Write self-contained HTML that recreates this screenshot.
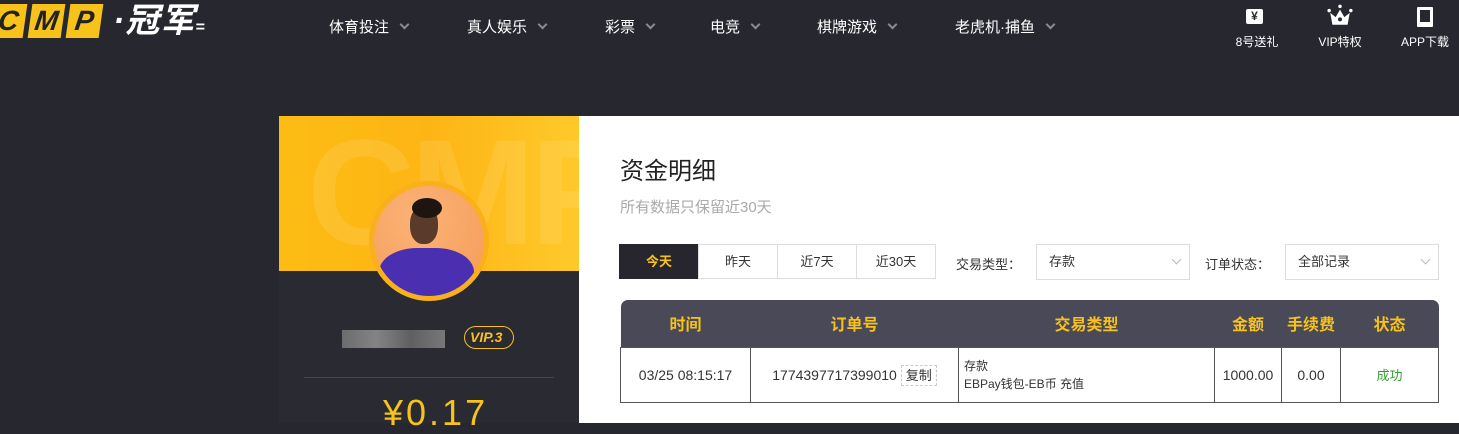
<!DOCTYPE html>
<html><head><meta charset="utf-8"><style>
*{margin:0;padding:0;box-sizing:border-box}
body{width:1459px;height:423px;overflow:hidden;background:#272730;font-family:"Liberation Sans","Noto Sans CJK SC",sans-serif;position:relative}
.a{position:absolute}
.nav{color:#fff;font-size:15px;top:16px}
.nav i{display:inline-block;width:7px;height:7px;border-right:2px solid #8a8a92;border-bottom:2px solid #8a8a92;transform:rotate(45deg);margin-left:12px;position:relative;top:-4px}
.ic{color:#fff;font-size:12px;top:33px;text-align:center;width:60px}
.logo b{display:inline-block;width:33px;height:34px;background:#f7c31b;color:#222;font-style:italic;font-weight:900;font-size:28px;text-align:center;line-height:34px;margin-right:5px;transform:skewX(-8deg)}
.tab{top:244px;height:35px;border:1px solid #ddd;font-size:13px;text-align:center;line-height:33px;color:#333;background:#fff}
.sel{top:244px;height:36px;border:1px solid #ddd;font-size:13px;line-height:34px;padding-left:12px;color:#333;background:#fff}
.sel:after{content:"";position:absolute;right:9px;top:11px;width:6px;height:6px;border-right:1px solid #bbb;border-bottom:1px solid #bbb;transform:rotate(45deg)}
table{border-collapse:collapse;position:absolute;left:620px;top:300px;width:819px}
th{background:#4a4957;color:#f6c21b;font-size:16px;height:47px;font-weight:bold}
td{border:1px solid #555;background:#fff;height:55px;font-size:14px;color:#333;text-align:center}
</style></head><body>
<div class="a logo" style="left:-8px;top:4px"><b>C</b><b>M</b><b>P</b></div>
<div class="a" style="left:113px;top:2px;color:#fff;font-size:34px;font-weight:bold;font-style:italic;line-height:38px;letter-spacing:1px">·冠军<span style="font-size:16px">=</span></div>
<div class="a nav" style="left:329px">体育投注<i></i></div>
<div class="a nav" style="left:467px">真人娱乐<i></i></div>
<div class="a nav" style="left:605px">彩票<i></i></div>
<div class="a nav" style="left:710px">电竞<i></i></div>
<div class="a nav" style="left:817px">棋牌游戏<i></i></div>
<div class="a nav" style="left:955px">老虎机·捕鱼<i></i></div>
<div class="a" style="left:1246px;top:9px;width:17px;height:15px;background:#fff;border-radius:2px;color:#272730;font-size:12px;font-weight:bold;text-align:center;line-height:15px">¥</div>
<div class="a ic" style="left:1227px">8号送礼</div>
<svg class="a" style="left:1327px;top:4px" width="26" height="22" viewBox="0 0 24 20"><circle cx="12" cy="2" r="1.6" fill="#fff"/><circle cx="2" cy="6" r="1.6" fill="#fff"/><circle cx="22" cy="6" r="1.6" fill="#fff"/><path d="M3 8 L8 12 L12 5 L16 12 L21 8 L19 19 H5Z" fill="#fff"/><circle cx="12" cy="14" r="1.8" fill="#272730"/></svg>
<div class="a ic" style="left:1310px">VIP特权</div>
<div class="a" style="left:1417px;top:7px;width:16px;height:20px;border:3px solid #fff;border-bottom-width:5px;border-radius:1px"></div>
<div class="a ic" style="left:1395px">APP下载</div>

<div class="a" style="left:279px;top:116px;width:300px;height:307px;background:#2a2a33"></div>
<div class="a" style="left:279px;top:116px;width:300px;height:155px;background:linear-gradient(90deg,#fdbc14,#fdb515 50%,#ffc92a);overflow:hidden"><div style="position:absolute;left:28px;top:-10px;font-size:150px;font-weight:bold;color:rgba(255,255,255,.1);letter-spacing:-5px">CMP</div></div>
<div class="a" style="left:369px;top:181px;width:120px;height:120px;border-radius:50%;background:#f9b01a;padding:5px"><div style="width:110px;height:110px;border-radius:50%;background:radial-gradient(circle at 40% 30%,#fbb377,#f59a56);overflow:hidden;position:relative"><div style="position:absolute;left:36px;top:20px;width:28px;height:38px;border-radius:45%;background:#5a3a2a"></div><div style="position:absolute;left:38px;top:12px;width:30px;height:20px;border-radius:50%;background:#1e1410"></div><div style="position:absolute;left:5px;top:62px;width:95px;height:60px;border-radius:40% 40% 0 0;background:#4a2fb0"></div></div></div>
<div class="a" style="left:342px;top:330px;width:103px;height:18px;background:linear-gradient(90deg,#888,#aaa,#777,#999);opacity:.7"></div>
<div class="a" style="left:464px;top:326px;width:50px;height:23px;border:1px solid #f6c21b;border-radius:12px;color:#f6c21b;font-size:14px;font-weight:bold;font-style:italic;line-height:21px;padding-left:5px">VIP.3</div>
<div class="a" style="left:304px;top:377px;width:250px;height:1px;background:#44444d"></div>
<div class="a" style="left:383px;top:392px;color:#f6c21b;font-size:36px;letter-spacing:3px">¥0.17</div>

<div class="a" style="left:579px;top:116px;width:880px;height:307px;background:#fff"></div>
<div class="a" style="left:620px;top:151px;font-size:24px;color:#222">资金明细</div>
<div class="a" style="left:620px;top:196px;font-size:15px;color:#aaa">所有数据只保留近30天</div>
<div class="a tab" style="left:619px;width:80px;background:#27262f;border-color:#27262f;color:#f6c21b;font-weight:bold">今天</div>
<div class="a tab" style="left:698px;width:80px">昨天</div>
<div class="a tab" style="left:777px;width:80px">近7天</div>
<div class="a tab" style="left:856px;width:80px">近30天</div>
<div class="a" style="left:956px;top:254px;font-size:13px;color:#333">交易类型：</div>
<div class="a sel" style="left:1036px;width:154px">存款</div>
<div class="a" style="left:1205px;top:254px;font-size:13px;color:#333">订单状态：</div>
<div class="a sel" style="left:1285px;width:154px">全部记录</div>
<table>
<tr><th style="width:130px;border-top-left-radius:7px">时间</th><th style="width:208px">订单号</th><th style="width:256px">交易类型</th><th style="width:67px">金额</th><th style="width:59px">手续费</th><th style="border-top-right-radius:7px">状态</th></tr>
<tr><td>03/25 08:15:17</td><td>1774397717399010 <span style="border:1px dashed #ccc;padding:2px 4px;font-size:13px">复制</span></td><td style="text-align:left;padding-left:5px;font-size:12px;line-height:18px">存款<br>EBPay钱包-EB币 充值</td><td>1000.00</td><td>0.00</td><td style="color:#3a9a3a;font-size:13px">成功</td></tr>
</table>
</body></html>
